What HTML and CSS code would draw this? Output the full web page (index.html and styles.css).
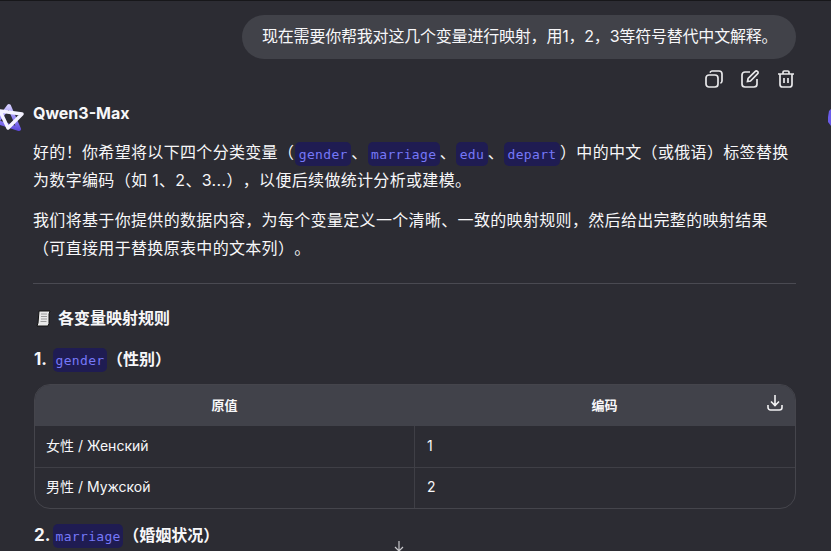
FILE: index.html
```html
<!DOCTYPE html>
<html lang="zh">
<head>
<meta charset="utf-8">
<title>Qwen3-Max</title>
<link rel="stylesheet" href="styles.css">
</head>
<body>
<main class="chat">
  <div class="user-row"><div class="bubble">现在需要你帮我对这几个变量进行映射，用1，2，3等符号替代中文解释。</div></div>
  <div class="actions">
    <svg class="icon" viewBox="0 0 18 18"><rect x="1" y="5" width="12" height="12" rx="3"/><path d="M5 2.6A2.5 2.5 0 0 1 7 1h7a3 3 0 0 1 3 3v7a2.500 2.500 0 0 1-1.600 2.200"/></svg>
    <svg class="icon" viewBox="0 0 18 18"><path d="M9 2H4a3 3 0 0 0-3 3v9a3 3 0 0 0 3 3h9a3 3 0 0 0 3-3V9"/><path d="M6.500 11.500l.6-3L14.300 1.300a1.400 1.400 0 0 1 2 0l.4.4a1.400 1.400 0 0 1 0 2L9.500 11z"/></svg>
    <svg class="icon" viewBox="0 0 18 18"><path d="M1 4h16M6 4V2.200A1.200 1.200 0 0 1 7.200 1h3.600A1.200 1.200 0 0 1 12 2.200V4"/><path d="M3 4v10.500A2.500 2.500 0 0 0 5.500 17h7a2.500 2.500 0 0 0 2.500-2.500V4M7 8v5M11 8v5"/></svg>
  </div>
  <svg class="logo" viewBox="0 0 24 29">
    <defs><linearGradient id="logoGrad" gradientUnits="userSpaceOnUse" x1="0" y1="2" x2="0" y2="28"><stop offset="0" stop-color="#d6d0ff"/><stop offset="0.55" stop-color="#8f80f5"/><stop offset="1" stop-color="#5a45d8"/></linearGradient></defs>
    <path class="logo-back" d="M9 3l10 23L-3 19z"/>
    <path class="logo-front" d="M0 8l22 3L8 25z"/>
  </svg>
  <svg class="logo-edge" viewBox="0 0 3 17"><path class="logo-fill" d="M3 0L1 2 0 8v5l3 4z"/></svg>
  <section class="reply">
    <h2 class="model">Qwen3-Max</h2>
    <p class="para para-first">好的！你希望将以下四个分类变量（<code class="chip-lead">gender</code>、<code>marriage</code>、<code>edu</code>、<code>depart</code>）中的中文（或俄语）标签替换为数字编码（如 1、2、3...），以便后续做统计分析或建模。</p>
    <p class="para para-second">我们将基于你提供的数据内容，为每个变量定义一个清晰、一致的映射规则，然后给出完整的映射结果（可直接用于替换原表中的文本列）。</p>
    <hr class="rule">
    <h3 class="title">
      <svg class="scroll" viewBox="0 0 15 17"><path class="scroll-page" d="M3 1h11l-1 3v9.500L12 16H1l1-3z"/><path class="scroll-lines" d="M5 4h6M5 6.500h6M5 9h6M4.500 11.500h6"/></svg>
      各变量映射规则
    </h3>
    <h4 class="sub"><span class="num">1.</span><code>gender</code>（性别）</h4>
    <div class="table-wrap">
      <div class="thead">
        <div class="th">原值</div>
        <div class="th">编码</div>
        <svg class="dl" viewBox="0 0 16 17"><path d="M8 1v10M4 7.500L8 11.500 12 7.500M1 11v2.500a2.500 2.500 0 0 0 2.500 2.500h9a2.500 2.500 0 0 0 2.500-2.500V11"/></svg>
      </div>
      <div class="tr"><div class="td">女性 / Женский</div><div class="td">1</div></div>
      <div class="tr"><div class="td">男性 / Мужской</div><div class="td">2</div></div>
    </div>
    <h4 class="sub sub-two"><span class="num">2.</span><code>marriage</code>（婚姻状况）</h4>
  </section>
  <svg class="down" viewBox="0 0 12 12"><path d="M6 1v10M2 7l4 4 4-4"/></svg>
</main>
</body>
</html>
```
FILE: styles.css
```css
* { box-sizing: border-box; }
html, body { margin: 0; height: 100%; }
body {
  background: #2c2c33;
  color: #f7f7f9;
  font-family: Inter, "Noto Sans CJK SC", sans-serif;
  font-size: 16px;
  text-spacing-trim: space-all;
  overflow: hidden;
}
.chat { position: relative; height: 551px; padding: 15px 35px 0 33px; overflow: hidden; box-shadow: inset 0 1px 0 #17171a; }
.user-row { display: flex; justify-content: flex-end; }
.bubble {
  background: #414249;
  border-radius: 22px;
  height: 44px;
  width: 554px;
  padding: 0 20px;
  line-height: 43px;
  letter-spacing: -0.2px;
  white-space: nowrap;
}
.actions { display: flex; justify-content: flex-end; gap: 18px; margin-top: 11px; padding-right: 1px; }
.icon { width: 18px; height: 18px; fill: none; stroke: #e8e8ea; stroke-width: 1.7; }
.logo { position: absolute; left: 0; top: 103px; width: 24px; height: 29px; overflow: hidden; }
.logo-back { fill: none; stroke: url(#logoGrad); stroke-width: 4; stroke-linejoin: round; }
.logo-front { fill: none; stroke: #f4f2ff; stroke-width: 3.5; stroke-linejoin: round; }
.logo-edge { position: absolute; right: 0; top: 109px; width: 3px; height: 17px; }
.logo-fill { fill: #6a5be8; }
.reply { margin-top: 15px; }
.model { margin: 0; font-size: 16px; line-height: 20px; font-weight: 700; }
.para { margin: 0; line-height: 28px; letter-spacing: 0.33px; }
.para-first { margin-top: 15px; }
.para-second { margin-top: 12px; }
code {
  font-family: "DejaVu Sans Mono", monospace;
  font-size: 13px;
  font-weight: 400;
  line-height: 1;
  letter-spacing: 0.33px;
  color: #7678f8;
  background: #1f1c52;
  border-radius: 5px;
  padding: 4.5px 3.5px;
}
.chip-lead { margin-left: 1px; }
.rule { border: 0; border-top: 1px solid #4a4a52; margin: 21px 0 0; }
.title { display: flex; align-items: center; gap: 7px; margin: 23px 0 0; font-size: 16px; line-height: 22px; font-weight: 700; }
.scroll { width: 15px; height: 17px; margin-left: 3px; flex: none; }
.scroll-page { fill: #e9e9e9; stroke: #111; stroke-width: 1; }
.scroll-lines { fill: none; stroke: #9a9a9a; stroke-width: 1; }
.sub { margin: 19px 0 0; padding-left: 1px; font-size: 16px; line-height: 22px; font-weight: 700; }
.sub code { position: relative; top: -1px; padding: 4.5px 2.5px; }
.num { display: inline-block; width: 19px; font-size: 17px; }
.sub-two { margin-top: 15px; }
.table-wrap {
  margin: 14px 0 0 1px;
  border: 1px solid #45454c;
  border-radius: 16px;
  overflow: hidden;
  font-size: 14px;
}
.thead { position: relative; display: grid; grid-template-columns: 379px 1fr; background: #41424a; height: 41px; }
.th { text-align: center; line-height: 41px; font-size: 13px; font-weight: 700; }
.dl { position: absolute; right: 12px; top: 9px; width: 16px; height: 17px; fill: none; stroke: #f0f0f2; stroke-width: 1.6; }
.tr { display: grid; grid-template-columns: 379px 1fr; height: 41px; border-top: 1px solid #3f3f46; }
.thead + .tr { border-top: 0; }
.tr + .tr .td { line-height: 38px; }
.td { padding: 0 11px; line-height: 40px; }
.td + .td { border-left: 1px solid #3f3f46; padding-left: 12px; }
.down { position: absolute; left: 393px; top: 540px; width: 12px; height: 12px; fill: none; stroke: #c8c8cc; stroke-width: 1.2; }
```
